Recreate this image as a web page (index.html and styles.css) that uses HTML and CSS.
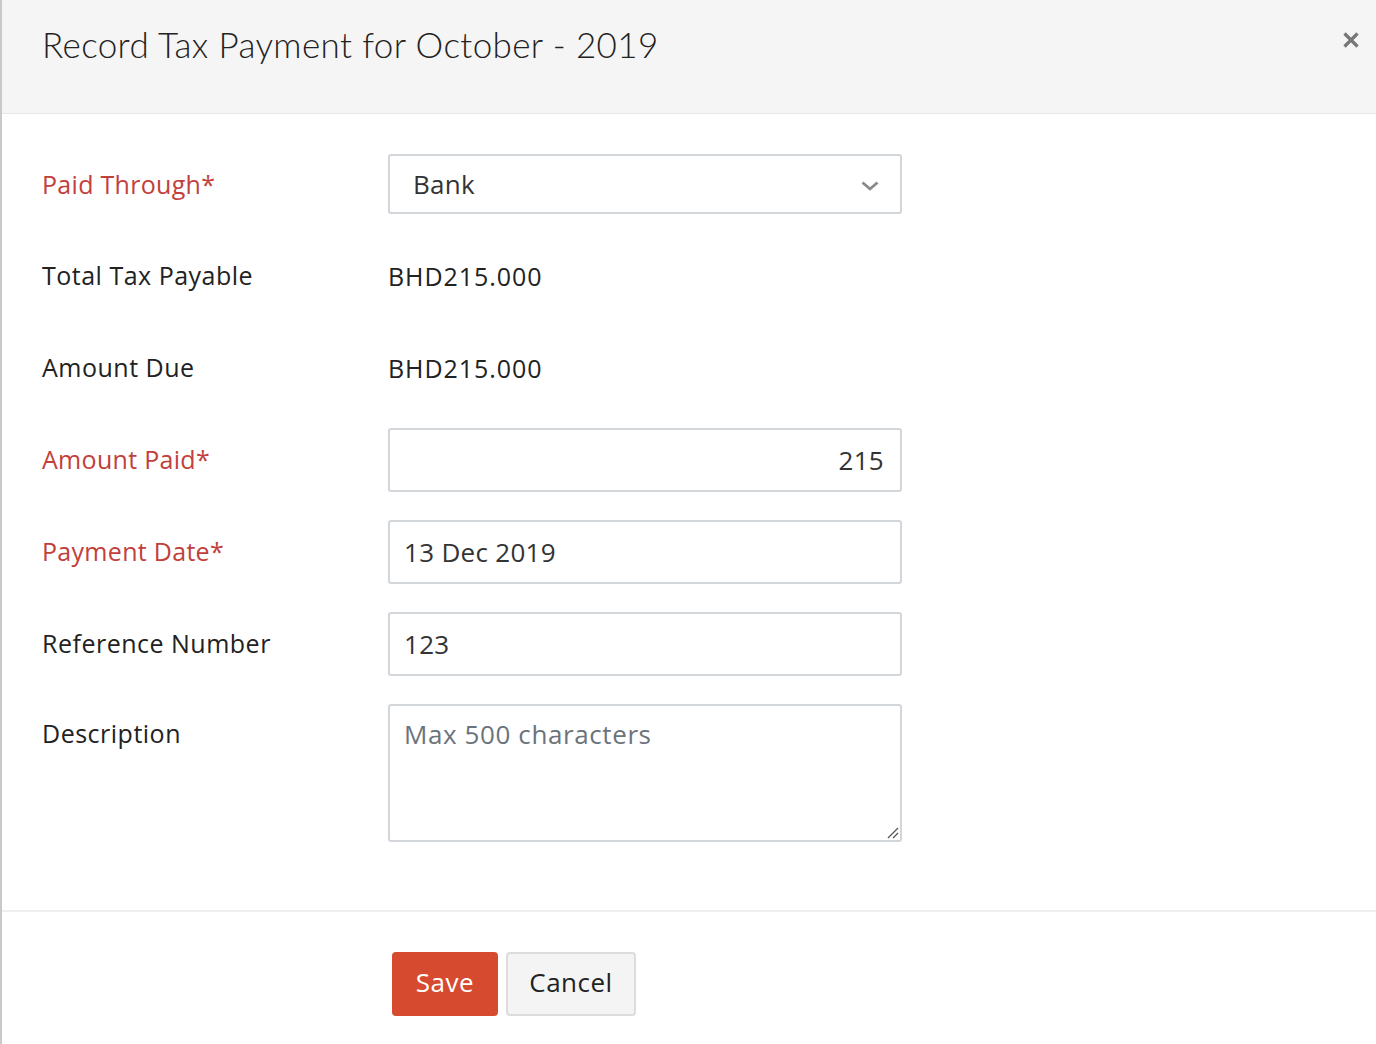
FILE: index.html
```html
<!DOCTYPE html>
<html lang="en">
<head>
<meta charset="utf-8">
<title>Record Tax Payment</title>
<link rel="stylesheet" href="styles.css">
</head>
<body>
<div class="modal">
  <header class="modal-header">
    <h1 class="modal-title">Record Tax Payment for October - 2019</h1>
    <button class="close" aria-label="Close">
      <svg width="18" height="18" viewBox="0 0 18 18"><path d="M2.5 2.5 L15.5 15.5 M15.5 2.5 L2.5 15.5" stroke="#777" stroke-width="3.2" stroke-linecap="butt"/></svg>
    </button>
  </header>
  <form class="modal-body">
    <div class="row row-select">
      <label class="label required">Paid Through*</label>
      <div class="field select">
        <span class="select-value">Bank</span>
        <svg class="chevron" width="20" height="12" viewBox="0 0 20 12"><path d="M2.5 2.5 L10 9 L17.5 2.5" fill="none" stroke="#8a8a8a" stroke-width="2.8"/></svg>
      </div>
    </div>
    <div class="row">
      <span class="label">Total Tax Payable</span>
      <span class="value">BHD215.000</span>
    </div>
    <div class="row">
      <span class="label">Amount Due</span>
      <span class="value">BHD215.000</span>
    </div>
    <div class="row">
      <label class="label required">Amount Paid*</label>
      <div class="field input right">215</div>
    </div>
    <div class="row">
      <label class="label required">Payment Date*</label>
      <div class="field input">13 Dec 2019</div>
    </div>
    <div class="row">
      <label class="label">Reference Number</label>
      <div class="field input">123</div>
    </div>
    <div class="row row-top">
      <label class="label label-top">Description</label>
      <div class="field textarea">
        <span class="placeholder">Max 500 characters</span>
        <svg class="grip" width="14" height="14" viewBox="0 0 14 14"><path d="M13 3 L3 13 M13 8 L8 13" stroke="#555" stroke-width="1.3"/></svg>
      </div>
    </div>
  </form>
  <footer class="modal-footer">
    <button class="btn btn-primary">Save</button>
    <button class="btn btn-default">Cancel</button>
  </footer>
</div>
</body>
</html>
```

FILE: styles.css
```css
* { box-sizing: border-box; }
html, body { margin: 0; padding: 0; background: #fff; }
body {
  font-family: "Open Sans", Lato, "Liberation Sans", sans-serif;
  color: #222;
}
.modal {
  width: 1376px;
  height: 1044px;
  border-left: 2px solid #c9c9c9;
  background: #fff;
  overflow: hidden;
}
.modal-header {
  height: 114px;
  background: #f5f5f5;
  border-bottom: 1px solid #e6e6e6;
  display: flex;
  align-items: flex-start;
  justify-content: space-between;
  padding: 0 16px 0 40px;
}
.modal-title {
  margin: 23px 0 0;
  font-family: Lato, "Open Sans", sans-serif;
  font-size: 35px;
  font-weight: 300;
  color: #222;
  letter-spacing: 0.38px;
}
.close {
  margin-top: 31px;
  background: none;
  border: 0;
  padding: 0;
  width: 18px;
  height: 18px;
  cursor: pointer;
}
.close svg { display: block; }
.modal-body {
  margin: 0;
  padding: 40px 0 68px 40px;
  display: flex;
  flex-direction: column;
  gap: 28px;
}
.row {
  display: grid;
  grid-template-columns: 346px 514px;
  align-items: center;
  height: 64px;
}
.row-select { height: 62px; align-items: start; }
.row-select .label { line-height: 60px; }
.row-top { height: 138px; align-items: start; }
.label {
  font-size: 25px;
  letter-spacing: 0.5px;
  color: #222;
  margin-top: -2px;
}
.row-select .label { margin-top: 0; }
.label-top { padding-top: 14px; }
.required { color: #c2403b; letter-spacing: 0.3px; }
.value {
  font-size: 25px;
  letter-spacing: 0.95px;
  color: #222;
}
.field {
  border: 2px solid #d2d6da;
  border-radius: 3px;
  background: #fff;
  font-size: 26px;
  letter-spacing: 0.3px;
  color: #333;
}
.select {
  height: 60px;
  display: flex;
  align-items: center;
  justify-content: space-between;
  padding: 0 20px 0 23px;
}
.chevron { display: block; margin-top: 4px; }
.input {
  height: 64px;
  display: flex;
  align-items: center;
  padding: 0 16px 0 14px;
}
.input.right { justify-content: flex-end; }
.textarea {
  height: 138px;
  position: relative;
  padding: 10px 14px;
}
.placeholder { color: #6b737b; letter-spacing: 0.6px; }
.grip { position: absolute; right: 1px; bottom: 1px; }
.modal-footer {
  border-top: 2px solid #eeeeee;
  padding: 40px 0 0 390px;
  display: flex;
  gap: 8px;
}
.btn {
  height: 64px;
  font-family: inherit;
  font-size: 26px;
  letter-spacing: 0.5px;
  border-radius: 4px;
  padding: 0 6px 4px;
  cursor: pointer;
}
.btn-primary {
  width: 106px;
  background: #d64a30;
  color: #fff;
  border: 0;
}
.btn-default {
  width: 130px;
  background: #f4f4f4;
  color: #222;
  border: 2px solid #dcdcdc;
}
```
